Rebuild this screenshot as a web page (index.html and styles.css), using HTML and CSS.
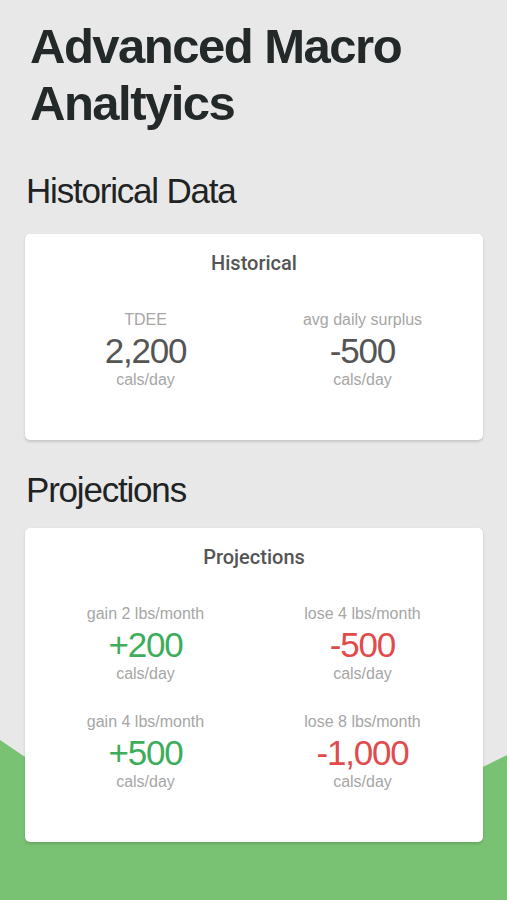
FILE: index.html
```html
<!DOCTYPE html>
<html lang="en">
<head>
<meta charset="utf-8">
<title>Advanced Macro Analtyics</title>
<link rel="stylesheet" href="styles.css">
</head>
<body>
<div class="page">
  <div class="backdrop"></div>
  <main class="content">
    <h1 class="title">Advanced Macro Analtyics</h1>

    <h2 class="section-heading section-heading--historical">Historical Data</h2>
    <section class="card">
      <h3 class="card-title">Historical</h3>
      <div class="stats">
        <div class="stat">
          <div class="stat-label">TDEE</div>
          <div class="stat-value">2,200</div>
          <div class="stat-unit">cals/day</div>
        </div>
        <div class="stat">
          <div class="stat-label">avg daily surplus</div>
          <div class="stat-value">-500</div>
          <div class="stat-unit">cals/day</div>
        </div>
      </div>
    </section>

    <h2 class="section-heading section-heading--projections">Projections</h2>
    <section class="card">
      <h3 class="card-title">Projections</h3>
      <div class="stats">
        <div class="stat">
          <div class="stat-label">gain 2 lbs/month</div>
          <div class="stat-value stat-value--gain">+200</div>
          <div class="stat-unit">cals/day</div>
        </div>
        <div class="stat">
          <div class="stat-label">lose 4 lbs/month</div>
          <div class="stat-value stat-value--loss">-500</div>
          <div class="stat-unit">cals/day</div>
        </div>
        <div class="stat">
          <div class="stat-label">gain 4 lbs/month</div>
          <div class="stat-value stat-value--gain">+500</div>
          <div class="stat-unit">cals/day</div>
        </div>
        <div class="stat">
          <div class="stat-label">lose 8 lbs/month</div>
          <div class="stat-value stat-value--loss">-1,000</div>
          <div class="stat-unit">cals/day</div>
        </div>
      </div>
    </section>
  </main>
</div>
</body>
</html>
```

FILE: styles.css
```css
* {
  box-sizing: border-box;
}

html,
body {
  margin: 0;
  padding: 0;
}

body {
  background: #e8e8e8;
  font-family: "Liberation Sans", Arial, sans-serif;
  color: #222;
}

.page {
  position: relative;
  min-height: 900px;
  overflow: hidden;
}

.backdrop {
  position: absolute;
  left: 0;
  top: 0;
  width: 100%;
  height: 900px;
  background: #79c273;
  clip-path: polygon(0 740px, 140px 835px, 340px 838px, 100% 755px, 100% 100%, 0 100%);
  z-index: 0;
}

.content {
  position: relative;
  z-index: 1;
  padding: 18px 24px 0 25px;
}

.title {
  margin: 0 0 0 5px;
  font-size: 49px;
  line-height: 57px;
  font-weight: 700;
  letter-spacing: -1.5px;
  color: #232828;
}

.section-heading {
  margin: 0 0 0 1px;
  font-size: 35px;
  line-height: 40px;
  font-weight: 400;
  letter-spacing: -1.2px;
  color: #1f2323;
}

.section-heading--historical {
  margin-top: 39px;
  margin-bottom: 23px;
}

.section-heading--projections {
  margin-top: 30px;
  margin-bottom: 18px;
}

.card {
  background: #fff;
  border-radius: 5px;
  box-shadow: 0 2px 3px rgba(0, 0, 0, 0.14), 0 0 1px rgba(0, 0, 0, 0.08);
  padding: 17px 12px 52px;
  width: 458px;
}

.card-title {
  margin: 0 0 35px;
  font-family: Roboto, "Liberation Sans", sans-serif;
  font-weight: 500;
  font-size: 20px;
  line-height: 24px;
  text-align: center;
  color: #555;
}

.stats {
  display: grid;
  grid-template-columns: 1fr 1fr;
  row-gap: 30px;
}

.stat {
  display: flex;
  flex-direction: column;
  align-items: center;
  text-align: center;
}

.stat-label {
  font-size: 16px;
  line-height: 20px;
  color: #a6a6a6;
}

.stat-value {
  font-size: 35px;
  line-height: 42px;
  letter-spacing: -1.2px;
  color: #555;
}

.stat-value--gain {
  color: #3dad5c;
}

.stat-value--loss {
  color: #e14b4b;
}

.stat-unit {
  font-size: 16px;
  line-height: 16px;
  color: #a6a6a6;
}
```
